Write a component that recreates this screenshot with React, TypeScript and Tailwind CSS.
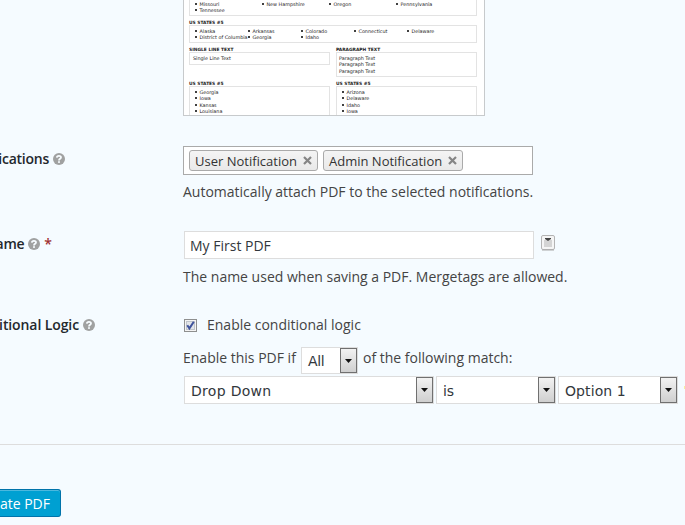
import type { ReactNode } from "react";

const sans = "font-['Open_Sans',sans-serif]";
const wide = "font-['DejaVu_Sans',sans-serif]";

function HelpIcon() {
  return (
    <svg className="block h-3 w-3 shrink-0" viewBox="0 0 12 12">
      <circle cx="6" cy="6" r="6" fill="#a0a1a1" />
      <path d="M3.8 4.6C4 2.3 8 2.3 8 4.5C8 5.9 6 5.8 6 7.5" fill="none" stroke="#f7fcff" strokeWidth="1.8" />
      <rect x="5.1" y="8.2" width="1.8" height="1.7" fill="#f7fcff" />
    </svg>
  );
}

function Label({ text, width, track, required }: { text: string; width: string; track: string; required?: boolean }) {
  return (
    <div className="w-[183px] shrink-0">
      <div className={`flex h-5 items-center justify-end whitespace-nowrap text-[14px] font-semibold text-[#23282d] ${width}`}>
        <span className={track}>{text}</span>
        <span className="ml-1"><HelpIcon /></span>
        {required && <span className="ml-1 text-[#a03030]">*</span>}
      </div>
    </div>
  );
}

function Chip({ text, width }: { text: string; width: string }) {
  return (
    <div className={`flex h-[21px] items-center justify-between rounded-[3px] border border-[#aaa] bg-gradient-to-b from-[#f4f4f4] to-[#e9e9e9] pr-[5px] pl-[5px] text-[13px] text-[#333] ${width}`}>
      <span className="whitespace-nowrap leading-5">{text}</span>
      <svg className="h-[9px] w-[9px] shrink-0" viewBox="0 0 9 9">
        <path d="M1 1L8 8M8 1L1 8" stroke="#858585" strokeWidth="2.2" />
      </svg>
    </div>
  );
}

function Select({ text, width, height, track }: { text: string; width: string; height: string; track: string }) {
  return (
    <div className={`flex shrink-0 items-stretch border border-[#ddd] bg-white ${width} ${height}`}>
      <span className={`flex flex-1 items-center whitespace-nowrap pl-[6px] pt-px text-[14px] text-[#32373c] ${track} ${wide}`}>{text}</span>
      <span className="flex w-[17px] items-center justify-center border border-[#707070] bg-gradient-to-b from-[#f2f2f2] to-[#cfcfcf]">
        <svg className="h-1 w-[7px]" viewBox="0 0 7 4"><path d="M0 0H7L3.5 4Z" fill="#111" /></svg>
      </span>
    </div>
  );
}

function Bullets({ items, cols }: { items: string[]; cols: string }) {
  return (
    <ul className={`grid pl-[5px] ${cols}`}>
      {items.map((item, i) => (
        <li key={i} className="flex h-[6.3px] items-center whitespace-nowrap">
          <span className="mr-[2.5px] h-[2px] w-[2px] shrink-0 rounded-full bg-black" />
          {item}
        </li>
      ))}
    </ul>
  );
}

function Heading({ children }: { children: ReactNode }) {
  return <div className="h-[6px] pt-[0.6px] text-[4.4px] leading-[6px] font-bold text-[#222]">{children}</div>;
}

function Preview() {
  const box = "border border-[#e3e3e3]";
  return (
    <div className={`h-[116px] w-[302px] overflow-hidden border border-t-0 border-[#c7cacc] bg-white pr-[7px] pl-[5px] text-[4.85px] leading-[6.3px] text-[#222] ${wide}`}>
      <div className="h-4 border border-t-0 border-[#e3e3e3] pt-[0.5px]">
        <Bullets cols="grid-cols-[67px_67px_67px_67px]" items={["Missouri", "New Hampshire", "Oregon", "Pennsylvania", "Tennessee"]} />
      </div>
      <div className="mt-[3px]"><Heading>US STATES #5</Heading></div>
      <div className={`h-[18px] pt-[2px] ${box}`}>
        <Bullets
          cols="grid-cols-[53px_53px_53px_53px_53px]"
          items={["Alaska", "Arkansas", "Colorado", "Connecticut", "Delaware", "District of Columbia", "Georgia", "Idaho"]}
        />
      </div>
      <div className="mt-[3px] grid grid-cols-[141px_141px] gap-[6px]">
        <div>
          <Heading>SINGLE LINE TEXT</Heading>
          <div className={`h-[13px] pl-[3px] pt-[2px] ${box}`}>Single Line Text</div>
        </div>
        <div>
          <Heading>PARAGRAPH TEXT</Heading>
          <div className={`h-[25px] pl-[2px] pt-[2px] ${box}`}>
            <p>Paragraph Text</p><p>Paragraph Text</p><p>Paragraph Text</p>
          </div>
        </div>
      </div>
      <div className="mt-[3px] grid grid-cols-[141px_141px] gap-[6px]">
        <div>
          <Heading>US STATES #5</Heading>
          <div className={`h-10 pt-[2px] ${box}`}><Bullets cols="grid-cols-1" items={["Georgia", "Iowa", "Kansas", "Louisiana"]} /></div>
        </div>
        <div>
          <Heading>US STATES #5</Heading>
          <div className={`h-10 pt-[2px] ${box}`}><Bullets cols="grid-cols-1" items={["Arizona", "Delaware", "Idaho", "Iowa"]} /></div>
        </div>
      </div>
    </div>
  );
}

export default function App() {
  return (
    <div className={`h-[525px] w-[685px] overflow-hidden bg-[#f5fbff] text-[14px] leading-5 text-[#444] ${sans}`}>
      <div className="flex h-[146px] pl-[183px]"><Preview /></div>

      <div className="flex h-[85px]">
        <div className="pt-[3px]"><Label text="ications" width="w-[65px]" track="tracking-[-0.25px]" /></div>
        <div>
          <div className="flex h-[29px] w-[350px] gap-[5px] border border-[#aaa] bg-white pt-[3px] pl-[5px]">
            <Chip text="User Notification" width="w-[129px]" />
            <Chip text="Admin Notification" width="w-[140px]" />
          </div>
          <p className="mt-[7px] whitespace-nowrap">Automatically attach PDF to the selected notifications.</p>
        </div>
      </div>

      <div className="flex h-[84px]">
        <div className="pt-[3px]"><Label text="ame" width="w-[52px]" track="tracking-[-0.25px]" required /></div>
        <div>
          <div className="flex items-start">
            <div className="ml-px flex h-[28px] w-[350px] items-center border border-[#ddd] bg-white pt-px pl-[5px] text-[#32373c]">My First PDF</div>
            <svg className="mt-[4px] ml-[7px] h-4 w-[14px]" viewBox="0 0 14 16">
              <rect x=".5" y=".5" width="13" height="14" rx="1.5" fill="#f5f5f5" stroke="#b4b4b4" />
              <path d="M1 15H13" stroke="#aaa" />
              <rect x="3" y="5" width="8" height="7" fill="#d4d4d4" />
              <path d="M4 3H10V4L7 6L4 4Z" fill="#444" />
            </svg>
          </div>
          <p className="mt-[8px] whitespace-nowrap">The name used when saving a PDF. Mergetags are allowed.</p>
        </div>
      </div>

      <div className="flex h-[129px]">
        <Label text="itional Logic" width="w-[95px]" track="tracking-[-0.1px]" />
        <div>
          <div className="flex h-5 items-center">
            <svg className="mt-[1px] ml-[1px] h-[13px] w-[13px]" viewBox="0 0 13 13">
              <rect x=".5" y=".5" width="12" height="12" fill="#f4f4f4" stroke="#8e8f8f" />
              <rect x="2.5" y="2.5" width="8" height="8" fill="#e2e5e9" stroke="#c0c5cb" />
              <path d="M3.3 6.2L5.4 9.4L9.8 2.7" fill="none" stroke="#3f539c" strokeWidth="2" />
            </svg>
            <span className="ml-[10px]">Enable conditional logic</span>
          </div>
          <div className="mt-3 flex h-[27px] whitespace-nowrap">
            <span className="w-[118px] pt-px">Enable this PDF if</span>
            <Select text="All" width="w-[57px]" height="h-[27px]" track="tracking-[-0.3px]" />
            <span className="ml-[5px] pt-px">of the following match:</span>
          </div>
          <div className="mt-[2px] flex pl-px">
            <Select text="Drop Down" width="w-[250px]" height="h-[28px]" track="tracking-[0.3px]" />
            <span className="w-[2px]" />
            <Select text="is" width="w-[120px]" height="h-[28px]" track="tracking-[-0.1px]" />
            <span className="w-[2px]" />
            <Select text="Option 1" width="w-[120px]" height="h-[28px]" track="tracking-[0.1px]" />
            <span className="mt-[10px] ml-[6px] h-[3px] w-px bg-[#f5f0a0]" />
          </div>
        </div>
      </div>

      <div className="h-px w-full bg-[#ddd]" />
      <div className="mt-11 flex h-7 w-[61px] items-center justify-end rounded-r-[3px] border border-l-0 border-[#0073aa] bg-[#00a0d2] pt-px pr-[10px] whitespace-nowrap text-white shadow-[inset_0_1px_0_#4bb8de]">ate PDF</div>
    </div>
  );
}
